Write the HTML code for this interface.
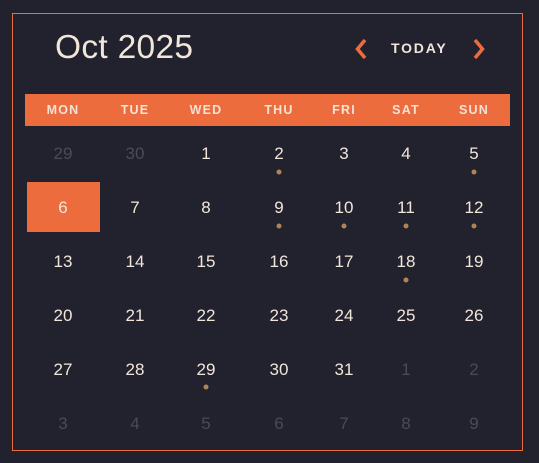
<!DOCTYPE html>
<html><head><meta charset="utf-8"><style>
body{margin:0;width:539px;height:463px;background:#22212e;font-family:"Liberation Sans",sans-serif;position:relative;overflow:hidden}
.frame{position:absolute;left:12px;top:13px;width:509px;height:436px;border:1px solid #ec6c3e}
.title{position:absolute;left:55px;top:29px;font-size:33.5px;color:#f1e6da;letter-spacing:0.3px}
.today{position:absolute;left:391px;top:40px;font-size:14px;color:#f1e6da;letter-spacing:1.8px;font-weight:bold}
.bar{position:absolute;left:25px;top:94px;width:485px;height:32px;background:#ec6c3e}
.h{position:absolute;top:103px;font-size:12.5px;font-weight:bold;color:#f4e3d6;letter-spacing:1.2px;transform:translateX(-50%)}
.d{position:absolute;font-size:17px;color:#f1e6da;transform:translate(-50%,-50%)}
.m{color:#4b4a57}
.dot{position:absolute;width:5px;height:5px;border-radius:50%;background:#b08553;transform:translate(-50%,-50%)}
.sel{position:absolute;left:27px;top:182px;width:73px;height:50px;background:#ec6c3e}
</style></head><body>
<div class="frame"></div>
<div class="title">Oct 2025</div>
<svg style="position:absolute;left:353px;top:37px" width="16" height="24"><path d="M12 3 L4.5 12 L12 21" stroke="#ec6c3e" stroke-width="3.5" fill="none"/></svg>
<div class="today">TODAY</div>
<svg style="position:absolute;left:471px;top:37px" width="16" height="24"><path d="M4 3 L11.5 12 L4 21" stroke="#ec6c3e" stroke-width="3.5" fill="none"/></svg>
<div class="bar"></div>
<div class="h" style="left:63px">MON</div>
<div class="h" style="left:135px">TUE</div>
<div class="h" style="left:206px">WED</div>
<div class="h" style="left:279px">THU</div>
<div class="h" style="left:344px">FRI</div>
<div class="h" style="left:406px">SAT</div>
<div class="h" style="left:474px">SUN</div>
<div class="sel"></div>

<div class="d m" style="left:63px;top:154px">29</div>
<div class="d m" style="left:135px;top:154px">30</div>
<div class="d" style="left:206px;top:154px">1</div>
<div class="d" style="left:279px;top:154px">2</div>
<div class="d" style="left:344px;top:154px">3</div>
<div class="d" style="left:406px;top:154px">4</div>
<div class="d" style="left:474px;top:154px">5</div>

<div class="d" style="left:63px;top:208px">6</div>
<div class="d" style="left:135px;top:208px">7</div>
<div class="d" style="left:206px;top:208px">8</div>
<div class="d" style="left:279px;top:208px">9</div>
<div class="d" style="left:344px;top:208px">10</div>
<div class="d" style="left:406px;top:208px">11</div>
<div class="d" style="left:474px;top:208px">12</div>

<div class="d" style="left:63px;top:262px">13</div>
<div class="d" style="left:135px;top:262px">14</div>
<div class="d" style="left:206px;top:262px">15</div>
<div class="d" style="left:279px;top:262px">16</div>
<div class="d" style="left:344px;top:262px">17</div>
<div class="d" style="left:406px;top:262px">18</div>
<div class="d" style="left:474px;top:262px">19</div>

<div class="d" style="left:63px;top:316px">20</div>
<div class="d" style="left:135px;top:316px">21</div>
<div class="d" style="left:206px;top:316px">22</div>
<div class="d" style="left:279px;top:316px">23</div>
<div class="d" style="left:344px;top:316px">24</div>
<div class="d" style="left:406px;top:316px">25</div>
<div class="d" style="left:474px;top:316px">26</div>

<div class="d" style="left:63px;top:370px">27</div>
<div class="d" style="left:135px;top:370px">28</div>
<div class="d" style="left:206px;top:370px">29</div>
<div class="d" style="left:279px;top:370px">30</div>
<div class="d" style="left:344px;top:370px">31</div>
<div class="d m" style="left:406px;top:370px">1</div>
<div class="d m" style="left:474px;top:370px">2</div>

<div class="d m" style="left:63px;top:424px">3</div>
<div class="d m" style="left:135px;top:424px">4</div>
<div class="d m" style="left:206px;top:424px">5</div>
<div class="d m" style="left:279px;top:424px">6</div>
<div class="d m" style="left:344px;top:424px">7</div>
<div class="d m" style="left:406px;top:424px">8</div>
<div class="d m" style="left:474px;top:424px">9</div>

<div class="dot" style="left:279px;top:172px"></div>
<div class="dot" style="left:474px;top:172px"></div>
<div class="dot" style="left:279px;top:226px"></div>
<div class="dot" style="left:344px;top:226px"></div>
<div class="dot" style="left:406px;top:226px"></div>
<div class="dot" style="left:474px;top:226px"></div>
<div class="dot" style="left:406px;top:280px"></div>
<div class="dot" style="left:206px;top:387px"></div>
</body></html>
